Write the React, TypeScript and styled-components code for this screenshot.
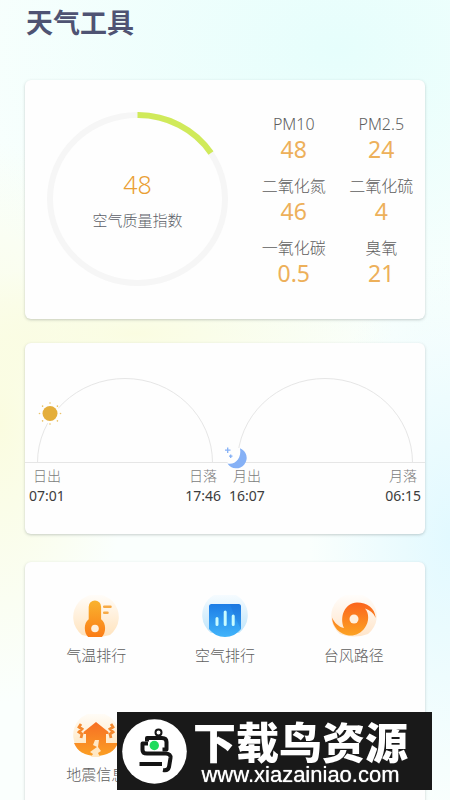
import React from "react";
import styled, { createGlobalStyle } from "styled-components";

const GlobalStyle = createGlobalStyle`
  *, *::before, *::after { box-sizing: border-box; }
  html { scrollbar-width: none; }
  body {
    margin: 0;
    font-family: "Noto Sans", "Noto Sans CJK SC", sans-serif;
    color: #7d7d7d;
  }
`;

const Page = styled.main`
  min-height: 100vh;
  padding: 3px 25px 0;
  background:
    radial-gradient(ellipse 130px 280px at 0 52%, rgba(250, 252, 222, 0.95), rgba(250, 252, 222, 0) 100%),
    radial-gradient(ellipse 260px 70px at 30% 41%, rgba(250, 252, 222, 0.9), rgba(250, 252, 222, 0) 100%),
    radial-gradient(ellipse 140px 280px at 100% 66%, rgba(226, 249, 255, 1), rgba(226, 249, 255, 0) 100%),
    radial-gradient(ellipse 420px 300px at 75% 6%, rgba(230, 254, 252, 1), rgba(230, 254, 252, 0) 100%),
    #fafffd;
`;

const Title = styled.h1`
  margin: 0 0 37px;
  padding-left: 1px;
  font-size: 27px;
  line-height: 40px;
  font-weight: 700;
  color: #4f5373;
`;

const Card = styled.section`
  margin-bottom: 24px;
  border-radius: 6px;
  background: #fefefe;
  box-shadow: 0 1px 3px rgba(60, 80, 80, 0.28);
`;

const AirCard = styled(Card)`
  display: grid;
  grid-template-columns: 225fr 175fr;
  padding: 32px 0 33px;
`;

const Gauge = styled.div`
  display: grid;
  padding: 0 22px;
  > * { grid-area: 1 / 1; }
  svg { display: block; width: 100%; height: 174px; }
`;

const GaugeText = styled.div`
  display: flex;
  flex-direction: column;
  align-items: center;
  justify-content: center;
  gap: 6px;
`;

const GaugeValue = styled.strong`
  font-size: 25px;
  line-height: 36px;
  font-weight: 300;
  color: #ea9f34;
`;

const GaugeLabel = styled.span`
  font-size: 15px;
  line-height: 24px;
  font-weight: 300;
  color: #5c5f68;
`;

const Metrics = styled.dl`
  display: grid;
  grid-template-columns: 1fr 1fr;
  row-gap: 12px;
  margin: 0;
  text-align: center;
`;

const Metric = styled.div`
  dt { font-size: 16px; line-height: 24px; font-weight: 300; color: #5e5e5e; white-space: nowrap; }
  dd { margin: 0; font-size: 23px; line-height: 26px; color: #edb05a; }
`;

const OrbitCard = styled(Card)`
  display: grid;
  grid-template-columns: 1fr 1fr;
  padding-bottom: 28px;
  margin-bottom: 28px;
`;

const Orbit = styled.div`
  svg { display: block; width: 100%; overflow: visible; }
`;

const Times = styled.div`
  display: flex;
  justify-content: space-between;
  padding: 3px 4px 0;
`;

const TimeMark = styled.div`
  display: flex;
  flex-direction: column;
  align-items: center;
  font-size: 14px;
  line-height: 20px;
  font-weight: 300;
  color: #7c7c7c;
  time { line-height: 20px; font-weight: 400; color: #3c3c3c; }
`;

const ToolCard = styled(Card)`
  display: grid;
  grid-template-columns: repeat(3, 1fr);
  row-gap: 47px;
  padding: 33px 7px 28px;
  margin-bottom: 0;
`;

const Tool = styled.button`
  display: flex;
  flex-direction: column;
  align-items: center;
  gap: 2px;
  padding: 0;
  border: 0;
  background: none;
  font: inherit;
  font-size: 15px;
  line-height: 24px;
  font-weight: 300;
  color: #5e5e5e;
  cursor: pointer;
  svg { display: block; width: 46px; height: 46px; }
`;

const Banner = styled.aside`
  position: fixed;
  right: 18px;
  bottom: 10px;
  display: flex;
  align-items: center;
  width: 70%;
  height: 78px;
  padding-left: 5px;
  background: #191919;
  svg { flex: none; width: 65px; height: 65px; }
`;

const BannerText = styled.div`
  flex: 1;
  display: flex;
  flex-direction: column;
  align-items: center;
  gap: 4px;
  padding: 4px 18px 0 0;
  color: #fff;
  white-space: nowrap;
`;

const BannerName = styled.strong`
  font-family: "Noto Sans CJK SC", sans-serif;
  font-size: 43px;
  line-height: 40px;
  font-weight: 900;
`;

const BannerLink = styled.a`
  font-family: "Liberation Sans", sans-serif;
  font-size: 22px;
  line-height: 22px;
  color: #fff;
  text-decoration: none;
  text-shadow: 0 0 1px #fff;
`;

const metrics = [
  ["PM10", "48"],
  ["PM2.5", "24"],
  ["二氧化氮", "46"],
  ["二氧化硫", "4"],
  ["一氧化碳", "0.5"],
  ["臭氧", "21"],
];

const SunIcon = () => (
  <g>
    <circle cx="25" cy="70.500" r="10" fill="#fefefe" />
    <circle cx="25" cy="70.500" r="7.500" fill="#e4ae3c" />
    {[0, 45, 90, 135, 180, 225, 270, 315].map((a) => (
      <circle key={a} cx="35.500" cy="70.500" r="0.800" fill="#e9c36c" transform={`rotate(${a} 25 70.500)`} />
    ))}
  </g>
);

const MoonIcon = () => (
  <g>
    <path d="M1 105H16V122H3Z" fill="#fefefe" />
    <path d="M15 105.200A10.400 10.400 0 1 1 2.500 120.500C9.500 122.500 17 115.500 15 105.200Z" fill="#86b1f6" />
    <path d="M2.700 104.500V110M0 107.200H5.500M5.700 111.500V115M4 113.200H7.500" stroke="#86b1f6" strokeWidth="1.300" />
  </g>
);

const OrbitPanel = ({ from, to, children }: { from: [string, string]; to: [string, string]; children: React.ReactNode }) => (
  <Orbit>
    <svg viewBox="0 0 200 120" aria-hidden="true">
      <path d="M12.500 119.500A87.500 84 0 0 1 187.500 119.500M0 119.500H200" fill="none" stroke="#e6e6e6" />
      {children}
    </svg>
    <Times>
      {[from, to].map(([label, time]) => (
        <TimeMark key={label}>
          <span>{label}</span>
          <time>{time}</time>
        </TimeMark>
      ))}
    </Times>
  </Orbit>
);

const Thermometer = () => (
  <svg viewBox="0 0 46 46" aria-hidden="true">
    <defs>
      <linearGradient id="thBg" x2="0" y2="1"><stop stopColor="#fffdfa" /><stop offset="1" stopColor="#ffe3bd" /></linearGradient>
      <linearGradient id="th" x2="0" y2="1"><stop stopColor="#f9b32f" /><stop offset="1" stopColor="#fb7d16" /></linearGradient>
    </defs>
    <path d="M9 40A22.800 22.800 0 1 1 37 40Q23 44 9 40Z" fill="url(#thBg)" />
    <path d="M15.700 11.700a6.200 6.200 0 0 1 12.400 0v12.500c2.700 2.300 4 5 4 8.800 0 4-1.200 6.800-3.200 9H15.200c-2.200-2.200-3.400-5-3.400-9 0-3.800 1.300-6.500 3.900-8.800Z" fill="url(#th)" />
    <circle cx="22" cy="33.500" r="3.800" fill="#fff0dc" />
    <path d="M31.200 11.800h6.300M31.200 17.800h3.300" stroke="#f7aa45" strokeWidth="2.500" strokeLinecap="round" />
  </svg>
);

const AirChart = () => (
  <svg viewBox="0 0 46 46" aria-hidden="true">
    <defs>
      <linearGradient id="airBg" x2="0" y2="1"><stop stopColor="#fafdff" /><stop offset="1" stopColor="#bfe5fb" /></linearGradient>
      <linearGradient id="air" x2="0" y2="1"><stop stopColor="#1d7de6" /><stop offset="1" stopColor="#41b4fa" /></linearGradient>
    </defs>
    <path d="M9 38A22.800 22.800 0 1 1 37 38Z" fill="url(#airBg)" />
    <path d="M7 11.500A2.500 2.500 0 0 1 9.500 9h27a2.500 2.500 0 0 1 2.500 2.500V34c-4 5-9.500 8-16 8S11 39 7 34Z" fill="url(#air)" />
    <path d="M28 9h8.500a2.500 2.500 0 0 1 2.500 2.500V34Q32 22 28 9Z" fill="#1669cf" opacity=".25" />
    <path d="M15 23.500v6M23.200 17v12.500M31.200 21v8.500" stroke="#c8fbff" strokeWidth="3" strokeLinecap="round" />
  </svg>
);

const Typhoon = () => (
  <svg viewBox="0 0 46 46" aria-hidden="true">
    <defs>
      <linearGradient id="tyBg" x2="0" y2="1"><stop stopColor="#fffefd" /><stop offset="1" stopColor="#ffe5ca" /></linearGradient>
      <linearGradient id="ty" x2="0" y2="1"><stop stopColor="#fb641d" /><stop offset="1" stopColor="#fca323" /></linearGradient>
    </defs>
    <path d="M9 39A22.800 22.800 0 1 1 37 39Q23 44 9 39Z" fill="url(#tyBg)" />
    <path d="M13 33C8 22 14 7.500 26 7.500 36 7.500 44 13 44.700 23 42.500 18 39 15 34 13.500 38.500 18.500 38 27 34 32.500 30 38.500 24 41 18 40.500 8.500 39.500 1.500 32 1 22.500 3.500 28 7.500 31.800 13 33Z" fill="url(#ty)" />
    <circle cx="23" cy="24" r="4.500" fill="#fff0df" />
  </svg>
);

const Earthquake = () => (
  <svg viewBox="0 0 46 46" aria-hidden="true">
    <defs>
      <linearGradient id="eqBg" x2="0" y2="1"><stop stopColor="#fffdf9" /><stop offset="1" stopColor="#ffe4ba" /></linearGradient>
      <linearGradient id="eq" x2="0" y2="1"><stop stopColor="#f76f24" /><stop offset="1" stopColor="#fb9f24" /></linearGradient>
    </defs>
    <path d="M9 39A22.800 22.800 0 1 1 37 39Z" fill="url(#eqBg)" />
    <path d="M23 8 35.500 18v2H33v9h12C42 37 34 42 23 42S4 37 1 29h12v-9h-2.500v-2Z" fill="url(#eq)" />
    <path d="m22 26-2 5 4 2-7 5 3 2-2 3h9l-2-4 3-2-3-4 1-7Z" fill="#ffe8c5" />
    <path d="m8 10-2 3 3 2-3 3 3 2-1 4M38 10l2 3-3 2 3 3-3 2 1 4" fill="none" stroke="#f4892f" strokeWidth="2.800" />
  </svg>
);

const tools = [
  { name: "气温排行", Icon: Thermometer },
  { name: "空气排行", Icon: AirChart },
  { name: "台风路径", Icon: Typhoon },
  { name: "地震信息", Icon: Earthquake },
];

const BirdLogo = () => (
  <svg viewBox="0 0 65 65" aria-hidden="true">
    <circle cx="32.500" cy="32.500" r="32.300" fill="#fff" />
    <g fill="none" stroke="#151515" strokeWidth="4" strokeLinejoin="round">
      <circle cx="36.500" cy="13.500" r="3" strokeWidth="2" />
      <path d="M25 22.500V19H40Q44.500 19 44.500 23V30.500H40.500" />
      <path d="M26 24.500H20.500V31Q20.500 34.500 25 34.500H44Q49 35 48.500 39L47 48Q46 52 41 51" />
      <path d="M17.500 45H40" />
    </g>
    <circle cx="32.300" cy="26.500" r="4.700" fill="#1fdc5c" />
  </svg>
);

export default function App() {
  return (
    <>
      <GlobalStyle />
      <Page>
        <Title>天气工具</Title>
        <AirCard>
          <Gauge>
            <svg viewBox="0 0 181 174" preserveAspectRatio="none" aria-hidden="true">
              <ellipse cx="90.500" cy="87" rx="87.500" ry="84" fill="none" stroke="#f6f6f6" strokeWidth="6" />
              <path d="M90.500 3A87.500 84 0 0 1 164 41" fill="none" stroke="#d0ea5a" strokeWidth="6" />
            </svg>
            <GaugeText>
              <GaugeValue>48</GaugeValue>
              <GaugeLabel>空气质量指数</GaugeLabel>
            </GaugeText>
          </Gauge>
          <Metrics>
            {metrics.map(([label, value]) => (
              <Metric key={label}>
                <dt>{label}</dt>
                <dd>{value}</dd>
              </Metric>
            ))}
          </Metrics>
        </AirCard>
        <OrbitCard>
          <OrbitPanel from={["日出", "07:01"]} to={["日落", "17:46"]}>
            <SunIcon />
          </OrbitPanel>
          <OrbitPanel from={["月出", "16:07"]} to={["月落", "06:15"]}>
            <MoonIcon />
          </OrbitPanel>
        </OrbitCard>
        <ToolCard>
          {tools.map(({ name, Icon }) => (
            <Tool key={name} type="button">
              <Icon />
              {name}
            </Tool>
          ))}
        </ToolCard>
      </Page>
      <Banner>
        <BirdLogo />
        <BannerText>
          <BannerName>下载鸟资源</BannerName>
          <BannerLink href="http://www.xiazainiao.com">www.xiazainiao.com</BannerLink>
        </BannerText>
      </Banner>
    </>
  );
}
